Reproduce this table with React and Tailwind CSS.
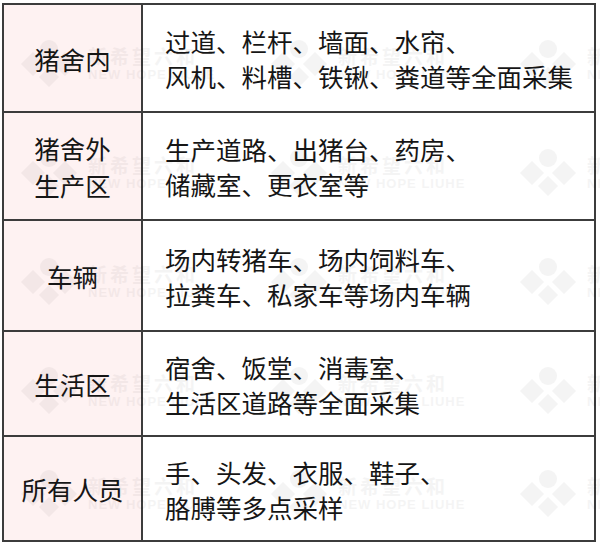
import React from "react";

const rows = [
  { left: ["猪舍内"], right: ["过道、栏杆、墙面、水帘、", "风机、料槽、铁锹、粪道等全面采集"], h: "h-[108px]" },
  { left: ["猪舍外", "生产区"], right: ["生产道路、出猪台、药房、", "储藏室、更衣室等"], h: "h-[108px]" },
  { left: ["车辆"], right: ["场内转猪车、场内饲料车、", "拉粪车、私家车等场内车辆"], h: "h-[111px]" },
  { left: ["生活区"], right: ["宿舍、饭堂、消毒室、", "生活区道路等全面采集"], h: "h-[105px]" },
  { left: ["所有人员"], right: ["手、头发、衣服、鞋子、", "胳膊等多点采样"], h: "h-[103px]" },
];

function Logo() {
  return (
    <svg width="62" height="50" viewBox="0 0 62 50">
      <circle cx="31" cy="11" r="9" fill="currentColor" />
      <path d="M15 14 L27 26 L15 38 L3 26 Z" fill="currentColor" />
      <path d="M47 14 L59 26 L47 38 L35 26 Z" fill="currentColor" />
      <path d="M31 29 L41 39 L31 49 L21 39 Z" fill="currentColor" />
    </svg>
  );
}

function Mark() {
  return (
    <div className="flex items-center gap-[8px] text-[#000]">
      <Logo />
      <div className="flex flex-col leading-none">
        <span className="text-[19px] font-bold tracking-[3px] whitespace-nowrap" style={{ fontFamily: '"Noto Sans CJK SC", sans-serif' }}>新希望六和</span>
        <span className="mt-[3px] text-[13px] font-bold tracking-[1px] whitespace-nowrap" style={{ fontFamily: '"Liberation Sans", sans-serif' }}>NEW HOPE LIUHE</span>
      </div>
    </div>
  );
}

const markRows = [38, 147, 256, 365, 468];
const markCols = [18, 268, 517];

export default function App() {
  return (
    <div className="relative w-[600px] h-[546px] bg-white overflow-hidden" style={{ fontFamily: '"Noto Sans CJK SC", "Microsoft YaHei", sans-serif' }}>
      <div className="pt-[3px] pl-[2px]">
        <div className="w-[594px] border-2 border-[#3c3c3c] flex flex-col">
          {rows.map((r, i) => (
            <div key={i} className={`flex ${r.h} ${i < rows.length - 1 ? "border-b-2 border-[#3c3c3c]" : ""}`}>
              <div className="w-[139px] shrink-0 bg-[#fef2f2] border-r-2 border-[#3c3c3c] flex flex-col items-center justify-center text-[25.5px] leading-[37px] text-[#161616]">
                {r.left.map((t, j) => (
                  <div key={j} className="whitespace-nowrap">{t}</div>
                ))}
              </div>
              <div className="flex-1 flex flex-col justify-center pl-[22px] text-[25.5px] leading-[35px] text-[#161616]">
                {r.right.map((t, j) => (
                  <div key={j} className="whitespace-nowrap">{t}</div>
                ))}
              </div>
            </div>
          ))}
        </div>
      </div>
      <div className="pointer-events-none absolute inset-0 opacity-[0.04]">
        {markRows.map((y) =>
          markCols.map((x) => (
            <div key={`${x}-${y}`} className="absolute" style={{ left: x, top: y }}>
              <Mark />
            </div>
          ))
        )}
      </div>
    </div>
  );
}
